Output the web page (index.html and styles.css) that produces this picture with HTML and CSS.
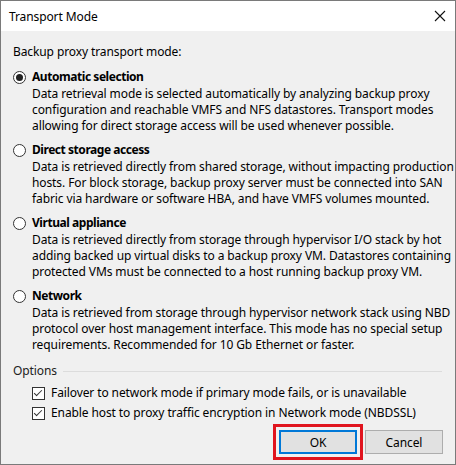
FILE: index.html
```html
<!DOCTYPE html>
<html lang="en">
<head>
    <meta charset="UTF-8">
    <title>Transport Mode</title>
    <link rel="stylesheet" href="styles.css">
</head>
<body>
    <div class="window">
        <div class="titlebar">
            <span class="title">Transport Mode</span>
            <svg class="close" width="12" height="12" viewBox="0 0 12 12">
                <path d="M1 1 L11 11 M11 1 L1 11" stroke="#111" stroke-width="1.1" fill="none"/>
            </svg>
        </div>

        <div class="content">
            <div class="heading">Backup proxy transport mode:</div>

            <div class="modes">
                <div class="mode">
                    <div class="mode-title"><span class="radio checked"></span>Automatic selection</div>
                    <div class="mode-desc">Data retrieval mode is selected automatically by analyzing backup proxy<br>configuration and reachable VMFS and NFS datastores. Transport modes<br>allowing for direct storage access will be used whenever possible.</div>
                </div>
                <div class="mode">
                    <div class="mode-title"><span class="radio"></span>Direct storage access</div>
                    <div class="mode-desc">Data is retrieved directly from shared storage, without impacting production<br>hosts. For block storage, backup proxy server must be connected into SAN<br>fabric via hardware or software HBA, and have VMFS volumes mounted.</div>
                </div>
                <div class="mode">
                    <div class="mode-title"><span class="radio"></span>Virtual appliance</div>
                    <div class="mode-desc">Data is retrieved directly from storage through hypervisor I/O stack by hot<br>adding backed up virtual disks to a backup proxy VM. Datastores containing<br>protected VMs must be connected to a host running backup proxy VM.</div>
                </div>
                <div class="mode">
                    <div class="mode-title"><span class="radio"></span>Network</div>
                    <div class="mode-desc">Data is retrieved from storage through hypervisor network stack using NBD<br>protocol over host management interface. This mode has no special setup<br>requirements. Recommended for 10 Gb Ethernet or faster.</div>
                </div>
            </div>

            <div class="options-label"><span>Options</span><span class="rule"></span></div>
            <div class="option first"><span class="checkbox"></span>Failover to network mode if primary mode fails, or is unavailable</div>
            <div class="option"><span class="checkbox"></span>Enable host to proxy traffic encryption in Network mode (NBDSSL)</div>

            <div class="buttons">
                <button class="btn btn-default">OK</button>
                <button class="btn">Cancel</button>
            </div>
        </div>
    </div>
</body>
</html>
```

FILE: styles.css
```css
body {
    margin: 0;
    font-family: "Noto Sans", sans-serif;
    font-size: 12px;
    letter-spacing: -0.1px;
    color: #000;
}
.window {
    width: 456px;
    height: 465px;
    box-sizing: border-box;
    border: 1px solid #7a7a7a;
    background-color: #f0f0f0;
    display: flex;
    flex-direction: column;
}
.titlebar {
    height: 30px;
    background-color: #fff;
    display: flex;
    align-items: center;
    justify-content: space-between;
    padding: 0 9px 0 8px;
}
.content {
    padding: 13px 12px 0 12px;
    line-height: 16px;
}
.heading {
    margin-bottom: 9px;
}
.modes {
    display: flex;
    flex-direction: column;
    gap: 8px;
}
.mode-title {
    display: flex;
    align-items: center;
    font-weight: bold;
    letter-spacing: -0.45px;
}
.radio {
    width: 11px;
    height: 11px;
    border: 1px solid #333;
    border-radius: 50%;
    background-color: #fff;
    margin: 0 6px 0 0;
    display: flex;
    align-items: center;
    justify-content: center;
}
.radio.checked::after {
    content: "";
    width: 7px;
    height: 7px;
    border-radius: 50%;
    background-color: #222;
}
.mode-desc {
    margin-top: 1px;
    padding-left: 19px;
    white-space: nowrap;
}
.options-label {
    display: flex;
    align-items: center;
    gap: 6px;
    margin-top: 10px;
    color: #222;
}
.rule {
    flex: 1;
    border-top: 1px solid #dcdcdc;
    margin-right: 1px;
}
.option {
    display: flex;
    align-items: center;
    padding-left: 19px;
    margin-top: 4px;
}
.option.first {
    margin-top: 6px;
}
.checkbox {
    width: 11px;
    height: 11px;
    border: 1px solid #333;
    background-color: #fff;
    margin-right: 6px;
    position: relative;
}
.checkbox::after {
    content: "";
    position: absolute;
    left: 3px;
    top: 0px;
    width: 3px;
    height: 7px;
    border: solid #333;
    border-width: 0 1px 1px 0;
    transform: rotate(45deg);
}
.buttons {
    display: flex;
    justify-content: flex-end;
    gap: 8px;
    margin-top: 9px;
}
.btn {
    width: 78px;
    height: 24px;
    font-family: inherit;
    font-size: 12px;
    font-weight: normal;
    letter-spacing: inherit;
    color: #000;
    background-color: #e1e1e1;
    border: 1px solid #adadad;
    padding: 0;
}
.btn-default {
    border: 2px solid #0078d7;
    outline: 3px solid #e0141e;
    outline-offset: 3px;
}
```
